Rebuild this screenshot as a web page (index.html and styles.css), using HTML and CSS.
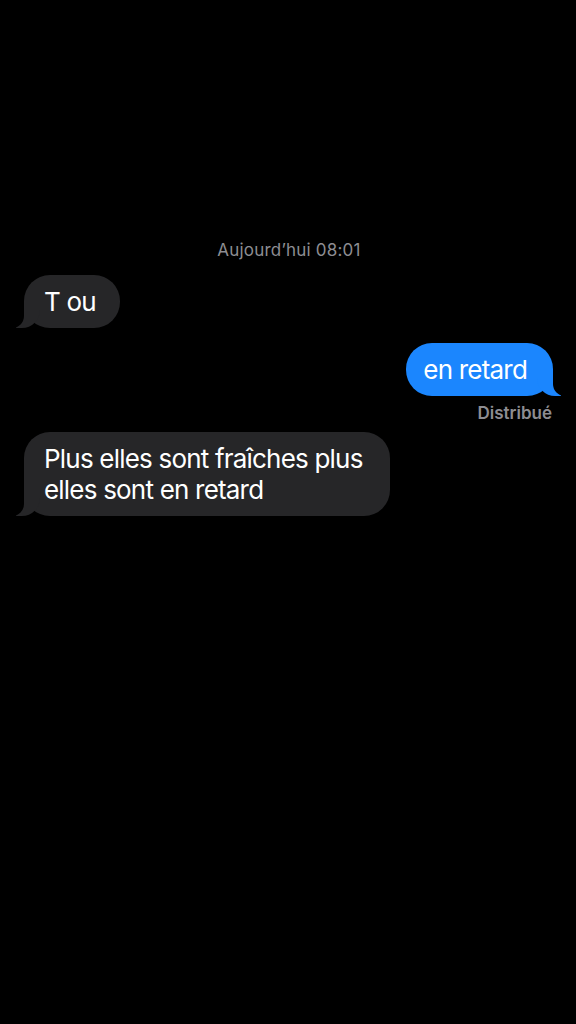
FILE: index.html
```html
<!DOCTYPE html>
<html lang="fr">
<head>
<meta charset="utf-8">
<title>Messages</title>
<link rel="stylesheet" href="styles.css">
</head>
<body>
<main class="thread">
  <div class="timestamp">Aujourd’hui 08:01</div>
  <div class="row row-in">
    <div class="bubble bubble-in">T ou</div>
  </div>
  <div class="row row-out">
    <div class="bubble bubble-out">en retard</div>
  </div>
  <div class="status">Distribué</div>
  <div class="row row-in">
    <div class="bubble bubble-in bubble-wide">Plus elles sont fraîches plus elles sont en retard</div>
  </div>
</main>
</body>
</html>
```
FILE: styles.css
```css
html, body {
  margin: 0;
  padding: 0;
  background: #000;
}
body {
  width: 576px;
  height: 1024px;
  overflow: hidden;
  font-family: "Inter", "Roboto", sans-serif;
  color: #fff;
}
.thread {
  display: flex;
  flex-direction: column;
  padding: 240px 23px 0 24px;
}
.timestamp {
  text-align: center;
  font-size: 17px;
  line-height: 20px;
  color: #8d8d92;
  font-weight: 400;
  letter-spacing: 0.2px;
  padding-left: 1px;
}
.row {
  display: flex;
}
.row-in {
  justify-content: flex-start;
  margin-top: 15px;
}
.row-out {
  justify-content: flex-end;
  margin-top: 15px;
}
.bubble {
  position: relative;
  font-size: 26px;
  line-height: 31px;
  padding: 11px 24px 11px 20px;
  border-radius: 26px;
  letter-spacing: -0.8px;
}
.bubble-in {
  background: #262628;
}
.bubble-out {
  background: #1b86fe;
  padding: 11px 26px 11px 17px;
}
.bubble-wide {
  max-width: 326px;
  padding-right: 20px;
}
.bubble-in::before {
  content: "";
  position: absolute;
  z-index: 0;
  bottom: 0;
  left: -8px;
  width: 24px;
  height: 26px;
  background: #262628;
  border-bottom-right-radius: 18px;
}
.bubble-in::after {
  content: "";
  position: absolute;
  z-index: 1;
  bottom: 0;
  left: -14px;
  width: 14px;
  height: 26px;
  background: #000;
  border-bottom-right-radius: 12px;
}
.bubble-out::before {
  content: "";
  position: absolute;
  z-index: 0;
  bottom: 0;
  right: -8px;
  width: 24px;
  height: 26px;
  background: #1b86fe;
  border-bottom-left-radius: 18px;
}
.bubble-out::after {
  content: "";
  position: absolute;
  z-index: 1;
  bottom: 0;
  right: -14px;
  width: 14px;
  height: 26px;
  background: #000;
  border-bottom-left-radius: 12px;
}
.status {
  align-self: flex-end;
  margin-top: 7px;
  margin-right: 1px;
  font-size: 17px;
  line-height: 21px;
  font-weight: 600;
  color: #8d8d92;
}
.status + .row-in {
  margin-top: 8px;
}
```
